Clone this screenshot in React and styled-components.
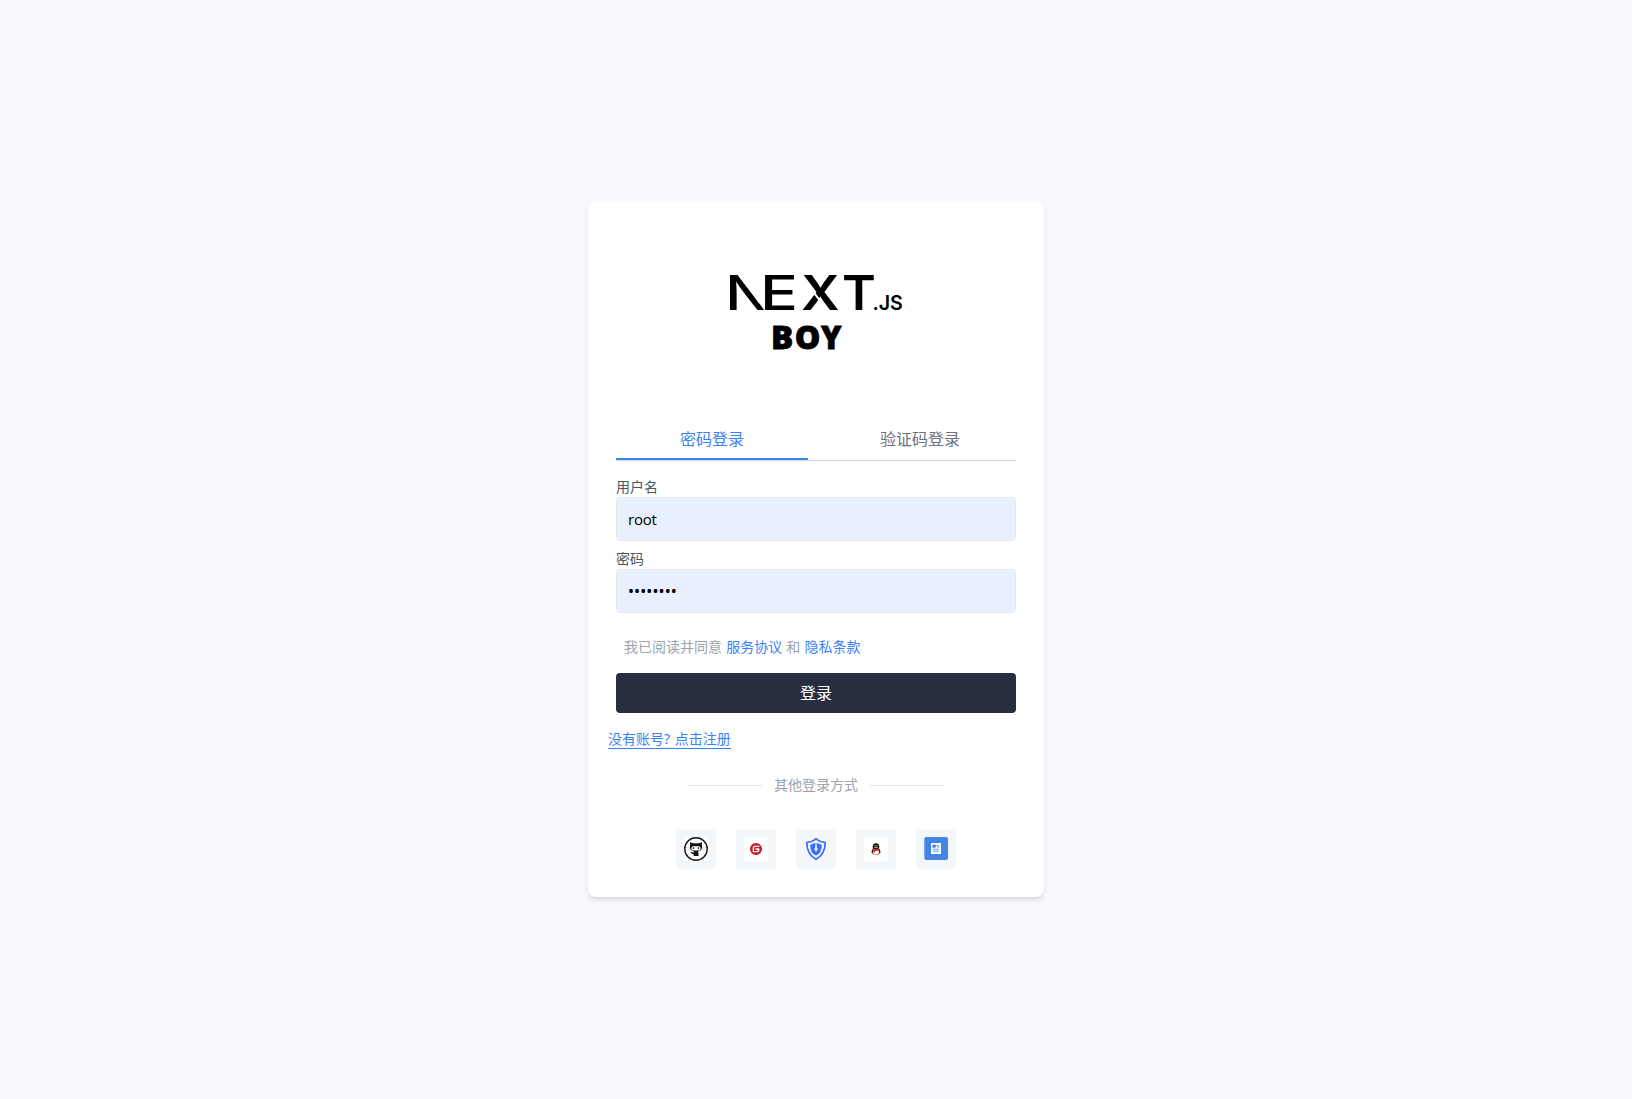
import React, { useState } from "react";
import styled, { createGlobalStyle } from "styled-components";
import { SiGitee } from "react-icons/si";

const GlobalStyle = createGlobalStyle`
  * { box-sizing: border-box; }
  body {
    margin: 0;
    background: #f8f9ff;
    font-family: "Noto Sans", "Noto Sans CJK SC", sans-serif;
    font-weight: 400;
    font-size: 16px;
    line-height: 24px;
  }
`;

const Page = styled.main`
  min-height: 1099px;
  display: flex;
  align-items: center;
  justify-content: center;
`;

const Card = styled.section`
  width: 456px;
  height: 695px;
  padding: 0 28px 28px;
  display: flex;
  flex-direction: column;
  background: #fff;
  border-radius: 8px;
  box-shadow: 0 4px 6px -1px rgba(0, 0, 0, 0.1), 0 2px 4px -2px rgba(0, 0, 0, 0.1);
`;

const LogoBox = styled.div`
  height: 216px;
  padding-top: 60px;
  display: flex;
  justify-content: center;
  align-items: flex-start;
`;

const Tabs = styled.div`
  display: flex;
  gap: 16px;
  height: 43px;
  border-bottom: 1px solid #d1d5db;
`;

const Tab = styled.button`
  flex: 1;
  padding: 8px 0 7px;
  border: 0;
  border-bottom: 2px solid ${(p) => (p.$active ? "#3b82f6" : "transparent")};
  background: none;
  color: ${(p) => (p.$active ? "#3b82f6" : "#6b7280")};
  font: inherit;
  cursor: pointer;
`;

const Form = styled.form`
  display: flex;
  flex-direction: column;
  padding-top: 16px;
`;

const Field = styled.label`
  display: flex;
  flex-direction: column;
  margin-bottom: 8px;
  color: #4b5563;
  font-size: 14px;
  line-height: 20px;
`;

const Input = styled.input`
  height: 44px;
  padding: 0 11px;
  border: 1px solid #e5e7eb;
  border-radius: 4px;
  background: #e8f0fe;
  color: #000;
  font: 400 ${(p) => (p.type === "password" ? '16px "Noto Sans"' : '15px "Open Sans"')}, sans-serif;
  letter-spacing: ${(p) => (p.type === "password" ? "0.1px" : "-0.2px")};
  outline: none;
`;

const Agreement = styled.p`
  margin: 16px 0 0;
  padding-left: 8px;
  color: #9ca3af;
  font-size: 14px;
  line-height: 20px;
  word-spacing: 0.5px;
`;

const Link = styled.a`
  color: #3b82f6;
  text-decoration: none;
`;

const Submit = styled.button`
  height: 40px;
  margin-top: 16px;
  border: 0;
  border-radius: 4px;
  background: #282d40;
  color: #fff;
  font: inherit;
  padding: 0;
`;

const Register = styled(Link)`
  align-self: flex-start;
  margin: 16px 0 0 -8px;
  font-size: 14px;
  line-height: 19px;
  word-spacing: 1px;
  border-bottom: 1px solid #3b82f6;
`;

const Divider = styled.div`
  display: flex;
  align-items: center;
  justify-content: center;
  gap: 12px;
  margin-top: 26px;
  color: #9ca3af;
  font-size: 14px;
  line-height: 20px;
  &::before,
  &::after {
    content: "";
    width: 74px;
    height: 1px;
    background: #e5e7eb;
  }
`;

const Providers = styled.div`
  display: flex;
  justify-content: center;
  gap: 20px;
  margin-top: auto;
`;

const Provider = styled.button`
  width: 40px;
  height: 40px;
  padding: 8px;
  border: 0;
  border-radius: 4px;
  background: #f3f7fa;
`;

const Mark = styled.span`
  width: 24px;
  height: 24px;
  display: flex;
  align-items: center;
  justify-content: center;
  background: ${(p) => (p.$plain ? "transparent" : "#fff")};
`;

const Glyph = ({ x, y, sx = 1, size, weight, family = "Inter", children, ...rest }) => (
  <text
    transform={`translate(${x} ${y}) scale(${sx} 1)`}
    fontSize={size}
    fontWeight={weight}
    fontFamily={`${family}, sans-serif`}
    {...rest}
  >
    {children}
  </text>
);

const Logo = () => (
  <svg width="200" height="100" viewBox="0 0 200 100" fill="#000">
    <defs>
      <clipPath id="n-cut">
        <path d="M0 0H22.3V13.5L47.8 47.4V60H0Z" />
      </clipPath>
    </defs>
    <g clipPath="url(#n-cut)">
      <Glyph x={9.3} y={48} sx={1.24} size={47.5} weight={500}>N</Glyph>
    </g>
    <Glyph x={44} y={48} sx={1.33} size={47.5} weight={500}>E</Glyph>
    <Glyph x={85.2} y={48} sx={1.12} size={47.5} weight={600}>X</Glyph>
    <path d="M95.8 27.8L103 37.4" stroke="#fff" strokeWidth="2" />
    <Glyph x={126} y={48} sx={1.08} size={47.5} weight={600}>T</Glyph>
    <Glyph x={156.5} y={47.5} size={20} weight={600} sx={0.98}>.JS</Glyph>
    <g stroke="#000" strokeWidth="0.8">
      <Glyph x={55} y={86.8} sx={1.02} size={32.5} weight={800} family="'Open Sans'">B</Glyph>
      <Glyph x={78.8} y={86.8} sx={0.99} size={32.5} weight={800} family="'Open Sans'">O</Glyph>
      <Glyph x={105} y={86.8} sx={0.95} size={32.5} weight={800} family="'Open Sans'">Y</Glyph>
    </g>
  </svg>
);

const Octocat = () => (
  <svg width="24" height="24" viewBox="0 0 24 24">
    <circle cx="12" cy="12" r="11.2" fill="#fff" stroke="#161616" strokeWidth="1.4" />
    <path d="M6.2 5L9 6.2H15L17.8 5L18 9.2C18.4 13 16 14.2 12 14.2S5.6 13 6 9.2Z" fill="#161616" />
    <rect x="7.4" y="9.2" width="9.2" height="4.2" rx="2" fill="#fff" />
    <ellipse cx="9.6" cy="11.2" rx=".8" ry="1.1" fill="#444" />
    <ellipse cx="14.4" cy="11.2" rx=".8" ry="1.1" fill="#444" />
    <path d="M9.7 14H14.3L14.6 19H9.7V17.2C7.8 17.5 7.4 15.8 6.4 15.2C8 14.8 8.4 16 9.7 15.8Z" fill="#161616" />
    <path d="M2 10.8H6M18 10.8H22M3 13L6 12.2M21 13L18 12.2" stroke="#aaa" strokeWidth=".5" />
  </svg>
);

const Shield = () => (
  <svg width="24" height="24" viewBox="0 0 24 24">
    <path d="M12 1.8C14.8 4.2 18 5.2 21.2 5.6C21.2 13 19 18.6 12 22.2C5 18.6 2.8 13 2.8 5.6C6 5.2 9.2 4.2 12 1.8Z" fill="none" stroke="#3a6cff" strokeWidth="1.7" />
    <path d="M11.3 5.7V10L10.2 12L12 15L13.8 12L12.7 10V5.7L17.8 8C17.6 13.4 16 16.8 12 18.6C8 16.8 6.4 13.4 6.2 8Z" fill="#3a6cff" />
  </svg>
);

const Penguin = () => (
  <svg width="24" height="24" viewBox="0 0 24 24">
    <ellipse cx="12" cy="14.6" rx="4" ry="3.3" fill="#15151b" />
    <path d="M8.4 12L7.2 15.4L8.6 15.2ZM15.6 12L16.8 15.4L15.4 15.2Z" fill="#15151b" />
    <ellipse cx="12" cy="14.9" rx="3" ry="2.7" fill="#fff" />
    <ellipse cx="12" cy="9.6" rx="3.3" ry="3.4" fill="#15151b" />
    <ellipse cx="11" cy="8.8" rx=".6" ry=".8" fill="#ccc" />
    <ellipse cx="13" cy="8.8" rx=".6" ry=".8" fill="#ccc" />
    <ellipse cx="12" cy="10.6" rx="2.1" ry=".7" fill="#f3ae24" />
    <path d="M8.2 11.4Q12 13 15.8 11.4L16 13Q13 14 11 13.9V15.6H9.4V13.6L8 12.9Z" fill="#dd2735" />
    <path d="M9 17.1H11.8V18H9ZM12.2 17.1H15V18H12.2Z" fill="#f3ae4a" />
  </svg>
);

const Document = () => (
  <svg width="24" height="24" viewBox="0 0 24 24">
    <rect x=".3" y="0" width="23.7" height="23" rx="2" fill="#4484e4" />
    <rect x="7" y="6" width="10" height="11" fill="#fff" />
    <path d="M8.8 8H11.4V10.2H8.8ZM12.6 8.5H15.2M12.6 10H15.2M8.8 12.3H15.2M8.8 14.4H15.2" fill="#4484e4" stroke="#4484e4" strokeWidth=".8" />
  </svg>
);

const providers = [
  { name: "GitHub", icon: <Octocat /> },
  { name: "Gitee", icon: <SiGitee size={12} color="#c71d23" /> },
  { name: "Authing", icon: <Shield />, plain: true },
  { name: "QQ", icon: <Penguin /> },
  { name: "Docs", icon: <Document />, plain: true },
];

const tabs = ["密码登录", "验证码登录"];

export default function App() {
  const [tab, setTab] = useState(0);
  return (
    <Page>
      <GlobalStyle />
      <Card>
        <LogoBox>
          <Logo />
        </LogoBox>
        <Tabs>
          {tabs.map((label, i) => (
            <Tab key={label} $active={i === tab} onClick={() => setTab(i)}>
              {label}
            </Tab>
          ))}
        </Tabs>
        <Form onSubmit={(e) => e.preventDefault()}>
          <Field>
            用户名
            <Input type="text" defaultValue="root" />
          </Field>
          <Field>
            密码
            <Input type="password" defaultValue="12345678" />
          </Field>
          <Agreement>
            我已阅读并同意 <Link href="#">服务协议</Link> 和 <Link href="#">隐私条款</Link>
          </Agreement>
          <Submit>登录</Submit>
        </Form>
        <Register href="#">没有账号? 点击注册</Register>
        <Divider>其他登录方式</Divider>
        <Providers>
          {providers.map((p) => (
            <Provider key={p.name} aria-label={p.name}>
              <Mark $plain={p.plain}>{p.icon}</Mark>
            </Provider>
          ))}
        </Providers>
      </Card>
    </Page>
  );
}
